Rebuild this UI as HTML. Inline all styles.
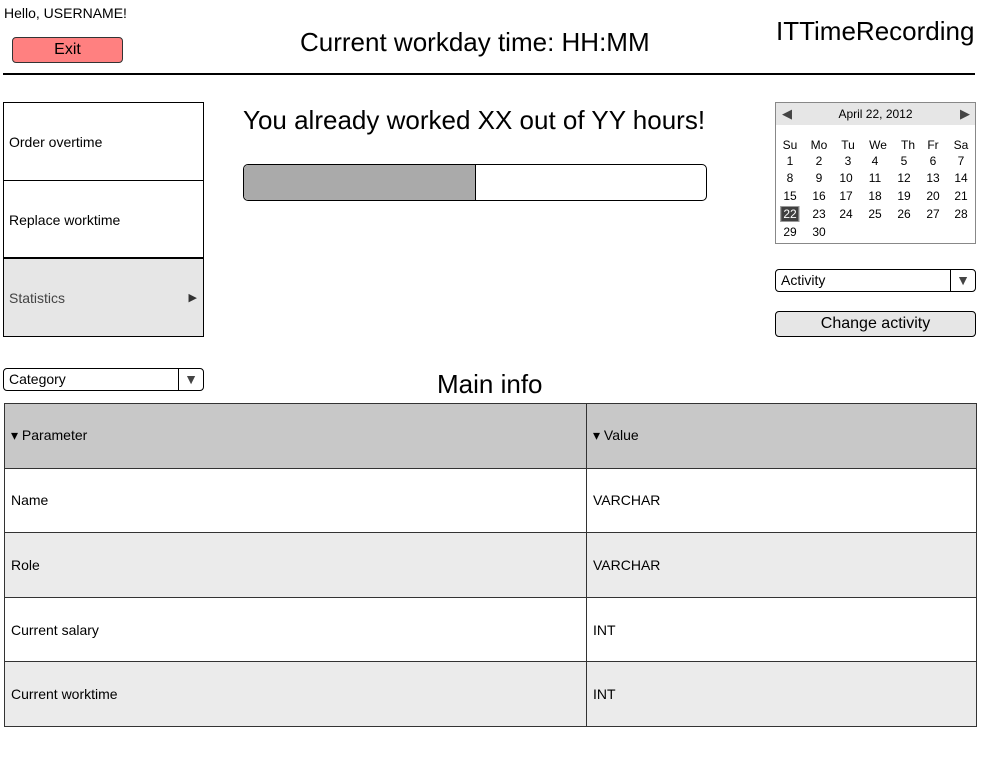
<!DOCTYPE html>
<html><head><meta charset="utf-8"><style>
body{margin:0;width:986px;height:759px;background:#fff;font-family:"Liberation Sans",sans-serif;color:#000;position:relative;overflow:hidden}
.a{position:absolute}
.cal span{position:absolute;font-size:12px;transform:translateX(-50%)}
td{border:1px solid #333;font-size:14px;padding:0 6px;height:63.6px}
</style></head><body>
<div class="a" style="left:4px;top:5px;font-size:14px">Hello, USERNAME!</div>
<div class="a" style="left:12px;top:37px;width:109px;height:24px;background:#ff8080;border:1px solid #333;border-radius:4px;text-align:center;line-height:24px;font-size:16px">Exit</div>
<div class="a" style="left:300px;top:27px;font-size:26px">Current workday time: HH:MM</div>
<div class="a" style="left:776px;top:16px;font-size:26px">ITTimeRecording</div>
<div class="a" style="left:3px;top:73px;width:972px;height:2px;background:#000"></div>

<div class="a" style="left:3px;top:102px;width:194px;height:77px;border:1px solid #000;font-size:14px;line-height:78px;padding-left:5px">Order overtime</div>
<div class="a" style="left:3px;top:180px;width:194px;height:77px;border:1px solid #000;border-top:none;font-size:14px;line-height:80px;padding-left:5px">Replace worktime</div>
<div class="a" style="left:3px;top:258px;width:194px;height:77px;border:1px solid #000;background:#e6e6e6;color:#444;font-size:14px;line-height:78px;padding-left:5px">Statistics<span style="position:absolute;right:6px;font-size:11px;color:#333">▶</span></div>

<div class="a" style="left:243px;top:105px;font-size:26px">You already worked XX out of YY hours!</div>
<div class="a" style="left:243px;top:164px;width:462px;height:35px;border:1px solid #000;border-radius:5px;overflow:hidden"><div style="width:231px;height:100%;background:#aaa;border-right:1px solid #000"></div></div>

<div class="a cal" style="left:775px;top:102px;width:199px;height:140px;border:1px solid #888">
<div style="height:22px;background:#e6e6e6;position:relative;font-size:12px;text-align:center;line-height:22px">April 22, 2012<span style="left:11px;top:0;color:#444;font-size:13px">◀</span><span style="left:189px;top:0;color:#444;font-size:13px">▶</span></div>
</div>
<div class="a cal" style="left:0;top:0">
<span style="left:790px;top:138px">Su</span><span style="left:819px;top:138px">Mo</span><span style="left:848px;top:138px">Tu</span><span style="left:878px;top:138px">We</span><span style="left:908px;top:138px">Th</span><span style="left:933px;top:138px">Fr</span><span style="left:961px;top:138px">Sa</span>
<span style="left:790px;top:154px">1</span><span style="left:819px;top:154px">2</span><span style="left:848px;top:154px">3</span><span style="left:875px;top:154px">4</span><span style="left:904px;top:154px">5</span><span style="left:933px;top:154px">6</span><span style="left:961px;top:154px">7</span>
<span style="left:790px;top:171px">8</span><span style="left:819px;top:171px">9</span><span style="left:846px;top:171px">10</span><span style="left:875px;top:171px">11</span><span style="left:904px;top:171px">12</span><span style="left:933px;top:171px">13</span><span style="left:961px;top:171px">14</span>
<span style="left:790px;top:189px">15</span><span style="left:819px;top:189px">16</span><span style="left:846px;top:189px">17</span><span style="left:875px;top:189px">18</span><span style="left:904px;top:189px">19</span><span style="left:933px;top:189px">20</span><span style="left:961px;top:189px">21</span>
<span style="left:790px;top:206px;background:#404040;color:#fff;border:1px solid #999;padding:0 2px;line-height:14px">22</span><span style="left:819px;top:207px">23</span><span style="left:846px;top:207px">24</span><span style="left:875px;top:207px">25</span><span style="left:904px;top:207px">26</span><span style="left:933px;top:207px">27</span><span style="left:961px;top:207px">28</span>
<span style="left:790px;top:225px">29</span><span style="left:819px;top:225px">30</span>
</div>

<div class="a" style="left:775px;top:269px;width:199px;height:21px;border:1px solid #000;border-radius:4px;font-size:14px;line-height:21px"><span style="padding-left:5px">Activity</span><div style="position:absolute;right:0;top:0;width:24px;height:21px;border-left:1px solid #000;text-align:center;font-size:14px;color:#444">▼</div></div>
<div class="a" style="left:775px;top:311px;width:199px;height:24px;border:1px solid #000;border-radius:4px;background:#e6e6e6;text-align:center;line-height:24px;font-size:16px">Change activity</div>

<div class="a" style="left:3px;top:368px;width:199px;height:21px;border:1px solid #000;border-radius:4px;font-size:14px;line-height:21px"><span style="padding-left:5px">Category</span><div style="position:absolute;right:0;top:0;width:24px;height:21px;border-left:1px solid #000;text-align:center;font-size:14px;color:#444">▼</div></div>
<div class="a" style="left:437px;top:369px;font-size:26px">Main info</div>

<table class="a" style="left:4px;top:403px;width:973px;border-collapse:collapse">
<tr style="background:#c8c8c8"><td style="width:569px">▾ Parameter</td><td>▾ Value</td></tr>
<tr><td>Name</td><td>VARCHAR</td></tr>
<tr style="background:#ebebeb"><td>Role</td><td>VARCHAR</td></tr>
<tr><td>Current salary</td><td>INT</td></tr>
<tr style="background:#ebebeb"><td>Current worktime</td><td>INT</td></tr>
</table>
</body></html>
